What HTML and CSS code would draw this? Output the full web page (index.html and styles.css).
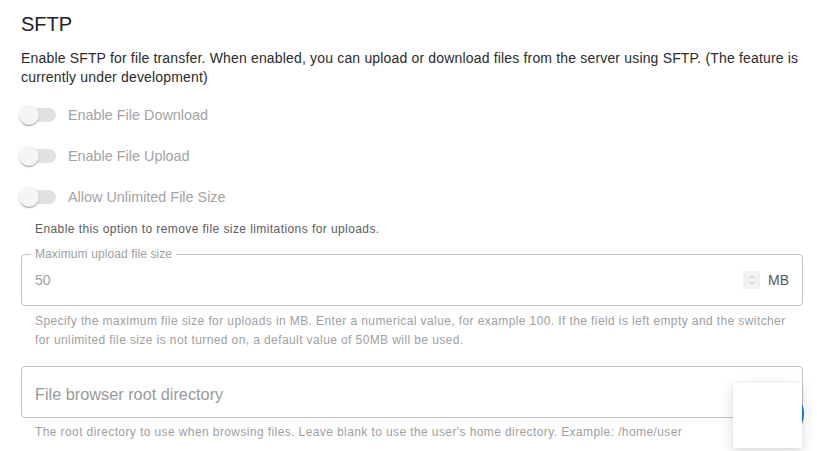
FILE: index.html
```html
<!DOCTYPE html>
<html lang="en">
<head>
<meta charset="utf-8">
<title>SFTP</title>
<link rel="stylesheet" href="styles.css">
</head>
<body>
<main class="page">
  <h2 class="title">SFTP</h2>
  <p class="desc">Enable SFTP for file transfer. When enabled, you can upload or download files from the server using SFTP. (The feature is currently under development)</p>

  <div class="switch-row">
    <span class="switch"><span class="track"></span><span class="thumb"></span></span>
    <span class="switch-label">Enable File Download</span>
  </div>
  <div class="switch-row">
    <span class="switch"><span class="track"></span><span class="thumb"></span></span>
    <span class="switch-label">Enable File Upload</span>
  </div>
  <div class="switch-row">
    <span class="switch"><span class="track"></span><span class="thumb"></span></span>
    <span class="switch-label">Allow Unlimited File Size</span>
  </div>
  <p class="note">Enable this option to remove file size limitations for uploads.</p>

  <div class="field field-size">
    <span class="field-label">Maximum upload file size</span>
    <span class="field-value">50</span>
    <span class="spinner">
      <svg width="10" height="14" viewBox="0 0 10 14"><path d="M2 5.5 L5 2.5 L8 5.5" fill="none" stroke="#c4c4c4" stroke-width="1"/><path d="M2 8.5 L5 11.5 L8 8.5" fill="none" stroke="#c4c4c4" stroke-width="1"/></svg>
    </span>
    <span class="unit">MB</span>
  </div>
  <p class="helper helper-size">Specify the maximum file size for uploads in MB. Enter a numerical value, for example 100. If the field is left empty and the switcher for unlimited file size is not turned on, a default value of 50MB will be used.</p>

  <div class="field field-root">
    <span class="placeholder">File browser root directory</span>
  </div>
  <p class="helper helper-root">The root directory to use when browsing files. Leave blank to use the user's home directory. Example: /home/user</p>

  <div class="fab"></div>
  <div class="popup"></div>
</main>
</body>
</html>
```

FILE: styles.css
```css
* { box-sizing: border-box; }
html, body { margin: 0; padding: 0; background: #fff; }
body {
  font-family: "Liberation Sans", Arial, sans-serif;
  color: #212121;
  width: 817px;
  height: 451px;
  overflow: hidden;
}
.page {
  position: relative;
  padding: 12px 14px 0 21px;
  height: 451px;
}
.title {
  margin: 0;
  font-size: 20px;
  font-weight: 400;
  line-height: 24px;
  color: #212121;
}
.desc {
  margin: 13px 0 0;
  font-size: 14px;
  line-height: 19px;
  letter-spacing: 0.17px;
  color: #2b2b2b;
}
.switch-row {
  display: flex;
  align-items: center;
  height: 41px;
}
.switch-row:first-of-type { margin-top: 7px; }
.switch {
  position: relative;
  width: 47px;
  height: 20px;
  flex: none;
  margin-left: -2px;
}
.track {
  position: absolute;
  left: 3px;
  top: 3px;
  width: 34px;
  height: 14px;
  border-radius: 7px;
  background: #e2e2e2;
}
.thumb {
  position: absolute;
  left: 0;
  top: 0;
  width: 20px;
  height: 20px;
  border-radius: 50%;
  background: #f5f5f5;
  box-shadow: 0 2px 1px -1px rgba(0,0,0,0.2), 0 1px 1px 0 rgba(0,0,0,0.14), 0 1px 3px 0 rgba(0,0,0,0.12);
}
.switch-label {
  font-size: 14.4px;
  color: #a3a3a3;
  margin-left: 2px;
}
.note {
  margin: 4px 0 0 14px;
  font-size: 12px;
  line-height: 16px;
  letter-spacing: 0.42px;
  color: #5c5c5c;
}
.field {
  position: relative;
  display: flex;
  align-items: center;
  height: 52px;
  border: 1px solid #c2c2c2;
  border-radius: 4px;
  padding: 0 13px;
}
.field-size { margin-top: 17px; }
.field-root { margin-top: 16px; }
.field-label {
  position: absolute;
  left: 9px;
  top: -8px;
  padding: 0 4px;
  background: #fff;
  font-size: 12px;
  line-height: 15px;
  letter-spacing: 0.1px;
  color: #a0a0a0;
}
.field-value {
  flex: 1;
  font-size: 14px;
  color: #a0a0a0;
}
.spinner {
  display: flex;
  align-items: center;
  justify-content: center;
  width: 17px;
  height: 18px;
  background: #f2f2f2;
  margin-right: 8px;
}
.unit {
  font-size: 14px;
  color: #5a5a5a;
}
.placeholder {
  font-size: 16.3px;
  padding-top: 4px;
  color: #9a9a9a;
}
.helper {
  margin: 5px 0 0 14px;
  font-size: 12px;
  line-height: 19px;
  letter-spacing: 0.4px;
  color: #a0a0a0;
}
.helper-size { margin-top: 6px; }
.helper-root { margin-top: 5px; }
.fab {
  position: absolute;
  left: 748px;
  top: 386px;
  width: 56px;
  height: 56px;
  border-radius: 50%;
  background: #1976d2;
}
.popup {
  position: absolute;
  left: 733px;
  top: 383px;
  width: 69px;
  height: 65px;
  background: #fff;
  box-shadow: 0 4px 14px rgba(0,0,0,0.13), 0 1px 4px rgba(0,0,0,0.06);
}
```
